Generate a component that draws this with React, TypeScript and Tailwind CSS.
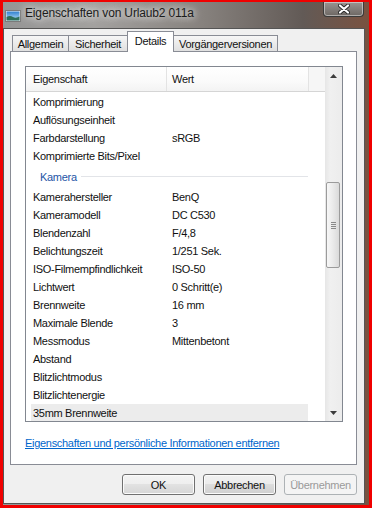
import React from "react";

const topRows: [string, string][] = [
  ["Komprimierung", ""],
  ["Auflösungseinheit", ""],
  ["Farbdarstellung", "sRGB"],
  ["Komprimierte Bits/Pixel", ""],
];

const camRows: [string, string][] = [
  ["Kamerahersteller", "BenQ"],
  ["Kameramodell", "DC C530"],
  ["Blendenzahl", "F/4,8"],
  ["Belichtungszeit", "1/251 Sek."],
  ["ISO-Filmempfindlichkeit", "ISO-50"],
  ["Lichtwert", "0 Schritt(e)"],
  ["Brennweite", "16 mm"],
  ["Maximale Blende", "3"],
  ["Messmodus", "Mittenbetont"],
  ["Abstand", ""],
  ["Blitzlichtmodus", ""],
  ["Blitzlichtenergie", ""],
  ["35mm Brennweite", ""],
];

function Row({ label, value, hl }: { label: string; value: string; hl?: boolean }) {
  return (
    <div className={hl ? "ml-[5px] flex h-[18px] w-[277px] shrink-0 items-center bg-[#ececec]" : "ml-[5px] flex h-[18px] w-[277px] shrink-0 items-center"}>
      <div className="w-[139px] shrink-0 whitespace-nowrap pl-[2px]">{label}</div>
      <div className="whitespace-nowrap pl-[2px]">{value}</div>
    </div>
  );
}

function PicIcon() {
  return (
    <svg width="16" height="12" viewBox="0 0 16 12">
      <defs>
        <linearGradient id="sky" x1="0" y1="0" x2="0" y2="1">
          <stop offset="0" stopColor="#2f7fd0" />
          <stop offset="1" stopColor="#bfe3fa" />
        </linearGradient>
      </defs>
      <rect x="0.5" y="0.5" width="15" height="11" fill="#f4f4f4" stroke="#7a7a7a" />
      <rect x="1.5" y="1.5" width="13" height="9" fill="url(#sky)" />
      <path d="M1.5 10.5 L1.5 7 Q5 5 8 7 Q11 8.5 14.5 6.5 L14.5 10.5 Z" fill="#2e6f5a" />
    </svg>
  );
}

function CloseX() {
  return (
    <svg width="12" height="10" viewBox="0 0 12 10">
      <path d="M2 1.5 L10 8.5 M10 1.5 L2 8.5" stroke="#2a2a2a" strokeWidth="4" strokeLinecap="round" />
      <path d="M2 1.5 L10 8.5 M10 1.5 L2 8.5" stroke="#ffffff" strokeWidth="2.2" strokeLinecap="round" />
    </svg>
  );
}

function Arrow({ up }: { up?: boolean }) {
  return (
    <svg width="7" height="4" viewBox="0 0 7 4">
      {up ? <polygon points="0,4 7,4 3.5,0" fill="#3c3c3c" /> : <polygon points="0,0 7,0 3.5,4" fill="#3c3c3c" />}
    </svg>
  );
}

export default function App() {
  return (
    <div className="h-[508px] w-[372px] bg-[#f00000] pb-[3px] pl-[3px] pr-[3px] pt-[2px] font-['Liberation_Sans',Arial,sans-serif]">
      <div className="flex h-full w-full flex-col bg-[linear-gradient(90deg,#959595_0%,#a3a19f_25%,#86817d_55%,#625a56_82%,#7a5240_100%)] pb-[1px] pr-[4px]">
        {/* Title bar */}
        <div className="flex h-[26px] shrink-0 items-start">
          <div className="ml-[2px] mt-[8px]">
            <PicIcon />
          </div>
          <div className="ml-[4px] mt-[4px] whitespace-nowrap text-[12px] leading-[14px] tracking-[-0.15px] text-[#1c1c1c] [text-shadow:0_0_6px_#e8e8e8,0_0_10px_#e8e8e8]">
            Eigenschaften von Urlaub2 011a
          </div>
          <div className="flex-1" />
          <div className="mr-[1px] flex h-[15px] w-[41px] items-start justify-center rounded-b-[4px] border border-t-0 border-[#3a3a3a] bg-[linear-gradient(#9a9492,#6d6763)] pt-[2px] shadow-[inset_0_0_0_1px_rgba(230,230,230,0.55)]">
            <CloseX />
          </div>
        </div>

        {/* Client area */}
        <div className="flex flex-1 flex-col border border-[#555] bg-[#f0f0f0] text-[11px] leading-[14px] tracking-[-0.3px] text-[#111]">
          {/* Tabs */}
          <div className="flex h-[22px] shrink-0 items-end pl-[8px]">
            <div className="flex h-[16px] w-[57px] items-center justify-center border border-b-0 border-[#898c95] bg-[linear-gradient(#f6f6f6,#e0e0e0)]">
              Allgemein
            </div>
            <div className="-ml-px flex h-[16px] w-[59px] items-center justify-center border border-b-0 border-r-0 border-[#898c95] bg-[linear-gradient(#f6f6f6,#e0e0e0)]">
              Sicherheit
            </div>
            <div className="relative z-10 -mb-px flex h-[21px] w-[47px] items-center justify-center border border-b-0 border-[#898c95] bg-white pb-[2px]">
              Details
            </div>
            <div className="flex h-[16px] w-[104px] items-center justify-center border border-b-0 border-l-0 border-[#898c95] bg-[linear-gradient(#f6f6f6,#e0e0e0)]">
              Vorgängerversionen
            </div>
          </div>

          {/* Panel */}
          <div className="ml-[6px] flex h-[414px] w-[347px] shrink-0 flex-col border border-[#898c95] bg-white pl-[14px] pt-[14px]">
            {/* List view */}
            <div className="flex h-[356px] w-[318px] shrink-0 border border-[#828790] bg-white">
              <div className="flex w-[299px] flex-col">
                <div className="flex h-[25px] shrink-0 border-b border-[#d5d5d5] bg-[linear-gradient(#ffffff,#fafafa_60%,#f3f3f3)]">
                  <div className="flex w-[141px] items-center border-r border-[#e3e3e3] pl-[7px]">Eigenschaft</div>
                  <div className="flex w-[142px] items-center border-r border-[#e3e3e3] pl-[5px]">Wert</div>
                  <div className="flex-1 bg-[#f6f6f6]" />
                </div>
                <div className="flex h-[329px] flex-col overflow-hidden pt-[1px]">
                  {topRows.map(([l, v]) => (
                    <Row key={l} label={l} value={v} />
                  ))}
                  <div className="flex h-[23px] w-[282px] shrink-0 items-center pl-[14px]">
                    <span className="whitespace-nowrap text-[#2455a6]">Kamera</span>
                    <div className="ml-[4px] h-px flex-1 bg-[#e2e4e8]" />
                  </div>
                  {camRows.map(([l, v], i) => (
                    <Row key={l} label={l} value={v} hl={i === camRows.length - 1} />
                  ))}
                </div>
              </div>
              {/* Scrollbar */}
              <div className="flex w-[17px] flex-col bg-[linear-gradient(90deg,#e6e6e6,#f0f0f0_30%,#ececec)]">
                <div className="flex h-[17px] shrink-0 items-center justify-center">
                  <Arrow up />
                </div>
                <div className="flex-1 pt-[98px]">
                  <div className="ml-[1px] flex h-[86px] w-[14px] items-center justify-center rounded-[2px] border border-[#9b9b9b] bg-[linear-gradient(90deg,#f7f7f7,#eaeaea_50%,#dadada)]">
                    <div className="flex flex-col gap-[1px]">
                      <div className="h-px w-[5px] bg-[#8a8a8a]" />
                      <div className="h-px w-[5px] bg-[#8a8a8a]" />
                      <div className="h-px w-[5px] bg-[#8a8a8a]" />
                      <div className="h-px w-[5px] bg-[#8a8a8a]" />
                    </div>
                  </div>
                </div>
                <div className="flex h-[17px] shrink-0 items-center justify-center">
                  <Arrow />
                </div>
              </div>
            </div>
            <div className="mt-[14px] h-[14px] whitespace-nowrap text-[#0066cc] underline">
              Eigenschaften und persönliche Informationen entfernen
            </div>
          </div>

          {/* Buttons */}
          <div className="mt-[9px] flex shrink-0 justify-end gap-[8px] pr-[7px]">
            <button className="h-[21px] w-[73px] rounded-[3px] border border-[#707070] bg-[linear-gradient(#f4f4f4_0%,#eeeeee_50%,#e2e2e2_50%,#d6d6d6_100%)] shadow-[inset_0_0_0_1px_#fbfbfb] text-[#111]">
              OK
            </button>
            <button className="h-[21px] w-[73px] rounded-[3px] border border-[#707070] bg-[linear-gradient(#f2f2f2_0%,#ebebeb_50%,#dddddd_50%,#cfcfcf_100%)] shadow-[inset_0_0_0_1px_#fbfbfb] text-[#111]">
              Abbrechen
            </button>
            <button className="h-[21px] w-[73px] rounded-[3px] border border-[#adb2b5] bg-[#f4f4f4] text-[#9a9a9a]">
              Übernehmen
            </button>
          </div>
        </div>
      </div>
    </div>
  );
}
